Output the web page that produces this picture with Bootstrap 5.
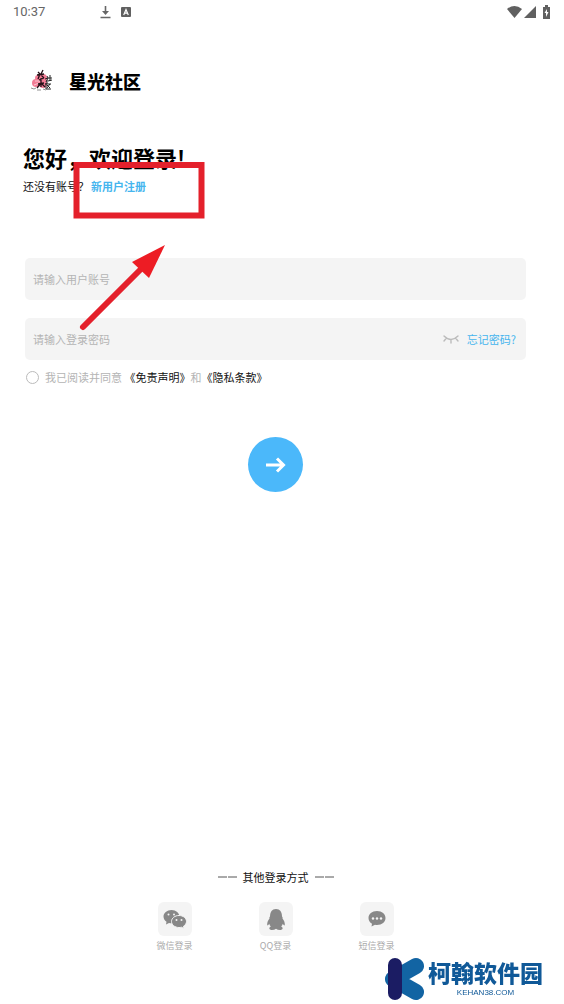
<!DOCTYPE html>
<html lang="zh-CN">
<head>
<meta charset="utf-8">
<meta name="viewport" content="width=device-width, initial-scale=1">
<title>星光社区</title>
<link href="https://cdn.jsdelivr.net/npm/bootstrap@5.3.0/dist/css/bootstrap.min.css" rel="stylesheet">
<style>
  body { font-family: "Noto Sans CJK SC", sans-serif; font-size: 11px; line-height: 16px; color: #111; background: #fff; }
  a { color: #45b5ee; }
  .screen { margin-right: 13px; }
  .status { height: 24px; padding-left: 13px; font-family: Roboto, sans-serif; font-size: 13px; color: #666; }
  .status-icons { margin-left: 55px; gap: 10px; }
  .brand-row { margin-top: 41px; padding-left: 31px; gap: 14px; height: 32px; }
  .brand-name { font-size: 18px; line-height: 32px; font-weight: 900; }
  .content { padding: 0 25px; }
  .intro { margin: 44px 0 0 -2px; }
  .hello { font-size: 22px; line-height: 32px; font-weight: 700; color: #000; }
  .join { margin-top: 5px; }
  .join a { font-weight: 700; margin-left: 2px; }
  .fields { margin-top: 64px; gap: 18px; }
  .field { height: 42px; padding: 0 10px 0 8px; background: #f4f4f4; border-radius: 5px; }
  .field .form-control { font-size: 11px; line-height: 16px; }
  .field .form-control::placeholder { color: #b4b4b4; }
  .terms { margin-top: 9px; padding-left: 1px; gap: 6px; color: #b4b4b4; }
  .terms a { color: #111; }
  .terms .form-check-input { width: 13px; height: 13px; border-color: #bbb; }
  .go { width: 55px; height: 55px; margin-top: 52px; background: #4bb8fa; }
  .others { margin-bottom: 51px; }
  .others-title { gap: 6px; }
  .ways { margin-top: 17px; }
  .way { width: 101px; font-size: 9px; line-height: 14px; color: #aaa; gap: 3px; }
  .tile { width: 34px; height: 34px; border-radius: 6px; background: #f4f4f4; }
  .watermark { right: 21px; bottom: 3px; color: #105998; gap: 3px; }
  .watermark-name { font-size: 23px; line-height: 30px; font-weight: 900; }
  .watermark-url { font-family: "Liberation Sans", sans-serif; font-size: 8px; line-height: 10px; margin-top: 1px; }
</style>
</head>
<body>
<div class="screen min-vh-100 d-flex flex-column">
  <header class="status d-flex align-items-center">
    <span>10:37</span>
    <span class="status-icons d-flex align-items-center">
      <svg width="11" height="14" viewBox="0 0 11 14" fill="none" stroke="#666"><path d="M5.500 1v7M.5 12.500h10" stroke-width="1.600"/><path d="M2 6h7L5.500 10z" fill="#666" stroke="none"/></svg>
      <svg width="10" height="10" viewBox="0 0 10 10"><rect width="10" height="10" rx="1" fill="#606060"/><path d="M2.700 8 5 2.500 7.300 8M3.500 6.200h3" stroke="#fff" stroke-width="1.200" fill="none"/></svg>
    </span>
    <svg class="ms-auto" width="44" height="14" viewBox="0 0 44 14" fill="#606060"><path d="M0 4Q7.500-2 15 4L7.500 13z"/><path d="M17 13 29 1v12z"/><path d="M36 2h2V0h3v2h2v12h-7z"/><path d="m40 4-2.500 4H39v4l2.500-5H40z" fill="#fff"/></svg>
  </header>

  <div class="brand-row d-flex align-items-center">
    <svg width="24" height="24" viewBox="0 0 24 24" fill="none">
      <g fill="#f27c95"><circle cx="7" cy="9" r="3"/><circle cx="12" cy="9" r="4"/><circle cx="5" cy="14" r="4"/><circle cx="12" cy="15" r="4"/></g>
      <path d="M4 12h5M3 16l5-2" stroke="#fff" opacity=".6"/>
      <path d="M7 3l2 2M12 1l-2 4M6 6l7-1M9 5l-2 5M10 6l3 3M8 11l5-2M10 9v9M7 15l6-1M10 14l-4 5M10 14l4 4" stroke="#251017" stroke-width="1.300"/>
      <path d="M16 7l1 2M14 10l3-1-2 4M16 11v4M17 9h4M19 6v6M17 12l4-1M14 15l6 0M15 14v6h5M16 16l3 3M19 15l-3 4" stroke="#222"/>
      <path d="M0 19l3 1 2-1M6 21h4M12 20l3 1" stroke="#777" stroke-width=".8"/>
    </svg>
    <span class="brand-name text-black">星光社区</span>
  </div>

  <main class="content d-flex flex-column flex-grow-1">
    <div class="intro">
      <h1 class="hello mb-0">您好，欢迎登录!</h1>
      <p class="join mb-0">还没有账号？<a href="#" class="text-decoration-none">新用户注册</a></p>
    </div>
    <form class="d-flex flex-column">
      <div class="fields d-flex flex-column">
        <div class="field d-flex align-items-center">
          <input type="text" class="form-control border-0 bg-transparent shadow-none p-0" placeholder="请输入用户账号" aria-label="用户账号">
        </div>
        <div class="field d-flex align-items-center gap-2">
          <input type="password" class="form-control border-0 bg-transparent shadow-none p-0" placeholder="请输入登录密码" aria-label="登录密码">
          <button type="button" class="btn p-0 border-0 d-flex" aria-label="显示密码">
            <svg width="16" height="10" viewBox="0 0 16 10" fill="none" stroke="#bbb" stroke-width="1.400" stroke-linecap="round"><path d="M1 2q7 7 14 0M3.500 4 1 7M8 5.500V9M12.500 4 15 7"/></svg>
          </button>
          <a href="#" class="text-decoration-none text-nowrap">忘记密码?</a>
        </div>
      </div>
      <div class="terms d-flex align-items-center">
        <input class="form-check-input m-0 rounded-circle shadow-none" type="checkbox" id="agree">
        <label for="agree">我已阅读并同意 <a href="#" class="text-decoration-none">《免责声明》</a>和<a href="#" class="text-decoration-none">《隐私条款》</a></label>
      </div>
      <button type="submit" class="go btn border-0 rounded-circle p-0 align-self-center d-flex align-items-center justify-content-center" aria-label="登录">
        <svg width="20" height="16" viewBox="0 0 20 16" fill="none" stroke="#fff" stroke-width="3"><path d="M0 8h17M11 1.500 17.500 8 11 14.500"/></svg>
      </button>
    </form>

    <section class="others mt-auto">
      <div class="others-title d-flex justify-content-center align-items-center">
        <svg width="19" height="2" viewBox="0 0 19 2"><path d="M0 1h9M10 1h9" stroke="#555"/></svg>
        <span>其他登录方式</span>
        <svg width="19" height="2" viewBox="0 0 19 2"><path d="M0 1h9M10 1h9" stroke="#555"/></svg>
      </div>
      <div class="ways d-flex justify-content-center">
        <button type="button" class="way btn border-0 p-0 d-flex flex-column align-items-center">
          <span class="tile d-flex align-items-center justify-content-center">
            <svg width="24" height="20" viewBox="0 0 24 20" fill="#888"><path d="M8.500 1C4 1 .5 4 .5 7.600c0 2.200 1.200 4 3 5.200L3 15.500l3-1.600q1.200.3 2.500.3C13 14.200 16.500 11 16.500 7.600S13 1 8.500 1z"/><path d="M16 6.500c-4.200 0-7.500 2.700-7.500 6s3.300 6 7.500 6q1.300 0 2.400-.3L21 19.500l-.5-2.300c1.700-1 3-2.700 3-4.700 0-3.300-3.300-6-7.500-6z" stroke="#f4f4f4"/><g fill="#f4f4f4"><circle cx="5.500" cy="5.500" r="1"/><circle cx="11" cy="5.500" r="1"/><circle cx="13.500" cy="11" r="1"/><circle cx="18.500" cy="11" r="1"/></g></svg>
          </span>
          <span>微信登录</span>
        </button>
        <button type="button" class="way btn border-0 p-0 d-flex flex-column align-items-center">
          <span class="tile d-flex align-items-center justify-content-center">
            <svg width="18" height="21" viewBox="0 0 18 21" fill="#888"><path d="M9 0C5 0 3 3 3 7.500 2.300 8.200 2.300 9 2.500 9.500 1 11.500 0 13.500.2 16c.2.800 1 .4 2-1.200.3 1 .8 2 1.600 2.700C1.500 18.500 2 21 5 21q2.500 0 4-1.300Q10.500 21 13 21c3 0 3.500-2.500 1.200-3.500.8-.7 1.300-1.700 1.600-2.700 1 1.600 1.800 2 2 1.200.2-2.500-.8-4.500-2.300-6.500.2-.5.200-1.300-.5-2C15 3 13 0 9 0z"/></svg>
          </span>
          <span>QQ登录</span>
        </button>
        <button type="button" class="way btn border-0 p-0 d-flex flex-column align-items-center">
          <span class="tile d-flex align-items-center justify-content-center">
            <svg width="18" height="16" viewBox="0 0 18 16" fill="#888"><path d="M9 0C4 0 .5 3 .5 7c0 2.500 1.300 4.500 3.500 5.700L3.500 15.500 7 13.800q1 .2 2 .2c5 0 8.500-3 8.500-7S14 0 9 0z"/><g fill="#f4f4f4"><circle cx="5" cy="7.500" r="1.200"/><circle cx="9" cy="7.500" r="1.200"/><circle cx="13" cy="7.500" r="1.200"/></g></svg>
          </span>
          <span>短信登录</span>
        </button>
      </div>
    </section>
  </main>
</div>

<svg class="position-absolute top-0 start-0 pe-none" width="210" height="335" viewBox="0 0 210 335" fill="none" stroke="#e4202b" stroke-width="6" aria-hidden="true">
  <path d="M76.500 165h125v50.500h-125z"/>
  <path d="M83 327 144 266" stroke-linecap="round"/>
  <path d="M165 245 132 262 149 278z" fill="#ed1c24" stroke="none"/>
</svg>

<div class="watermark position-fixed d-flex align-items-start">
  <svg width="40" height="44" viewBox="0 0 40 44" fill="none" stroke-linecap="round" stroke-width="16"><path d="M31 9 8 22 31 35" stroke="#1264a3" stroke-linejoin="round"/><path d="M10 8v28" stroke="#1b1c63" stroke-width="14"/></svg>
  <div class="text-center">
    <div class="watermark-name">柯翰软件园</div>
    <div class="watermark-url">KEHAN38.COM</div>
  </div>
</div>
<script src="https://cdn.jsdelivr.net/npm/bootstrap@5.3.0/dist/js/bootstrap.bundle.min.js"></script>
</body>
</html>
